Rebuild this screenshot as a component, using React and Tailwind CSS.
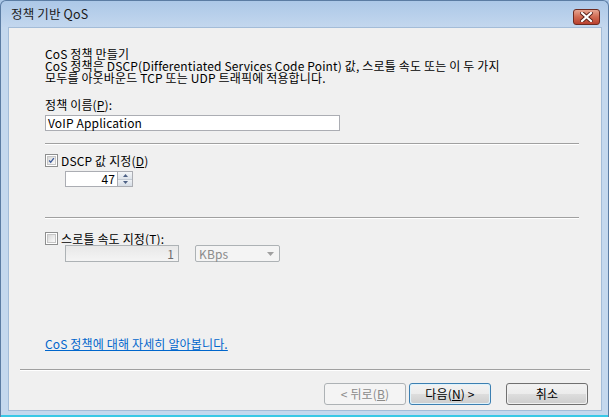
import React from "react";

function Check({ checked }) {
  return (
    <div className="w-[13px] h-[13px] border border-[#8e8f8f] bg-white p-[1px] shrink-0">
      <div className="w-full h-full border border-[#c6c6c6] bg-gradient-to-br from-[#d8d8d8] to-[#fbfbfb] relative">
        {checked && (
          <svg viewBox="0 0 9 9" className="absolute inset-0 w-full h-full">
            <path d="M1.5 4.5 L3.5 6.8 L7.5 1.5" stroke="#3b5998" strokeWidth="1.7" fill="none" />
          </svg>
        )}
      </div>
    </div>
  );
}

function Btn({ children, variant }) {
  const base =
    "w-[82px] h-[22px] rounded-[3px] flex items-center justify-center text-[12px] leading-none";
  if (variant === "disabled")
    return (
      <div className={base + " border border-[#adb2b5] bg-[#f4f4f4] text-[#8b8b8b]"}>{children}</div>
    );
  if (variant === "default")
    return (
      <div className={base + " border border-[#3c7fb1] p-[1px] bg-[#dff3fc] text-black"}>
        <div className="w-full h-full rounded-[2px] flex items-center justify-center bg-[linear-gradient(#f2f2f2_0%,#ebebeb_50%,#dddddd_50%,#cfcfcf_100%)]">{children}</div>
      </div>
    );
  return (
    <div className={base + " border border-[#707070] p-[1px] text-black"}>
      <div className="w-full h-full rounded-[2px] flex items-center justify-center bg-[linear-gradient(#f2f2f2_0%,#ebebeb_50%,#dddddd_50%,#cfcfcf_100%)]">{children}</div>
    </div>
  );
}

function Sep({ className = "" }) {
  return (
    <div className={"h-[2px] border-t border-[#a0a0a0] border-b border-b-white " + className} />
  );
}

export default function App() {
  return (
    <div className="w-[609px] h-[417px] bg-[#c4d8ee] font-['Noto_Sans_CJK_KR',sans-serif] text-[12px] tracking-[0.15px] text-black flex flex-col overflow-hidden relative">
      <div className="absolute inset-0 rounded-tl-[6px] rounded-tr-[6px] border-t border-l border-r border-[#5b7ca3] pointer-events-none" />
      {/* title bar */}
      <div className="h-[27px] shrink-0 flex items-start bg-gradient-to-b from-[#abc7e7] to-[#c3d7ee]">
        <div className="pl-[11px] pt-[6px] text-[12.5px] leading-[16px] text-[#1a1a1a]">정책 기반 QoS</div>
        <div className="ml-auto mr-[9px] mt-[9px] w-[27px] h-[16px] rounded-[3px] border border-[#6e2b20] bg-gradient-to-b from-[#e6a592] via-[#d06a52] to-[#b8402f] flex items-center justify-center">
          <svg width="13" height="10" viewBox="0 0 13 10">
            <path d="M2 1 L11 9 M11 1 L2 9" stroke="#5a2018" strokeWidth="4" strokeLinecap="square" />
            <path d="M2 1 L11 9 M11 1 L2 9" stroke="#ffffff" strokeWidth="2.2" strokeLinecap="square" />
          </svg>
        </div>
      </div>
      {/* client */}
      <div className="mr-[7px] ml-[8px] h-[384px] shrink-0 bg-[#f0f0f0] border border-[#a3bcd8] flex flex-col">
        <div className="pl-[36px] pt-[20px] flex flex-col">
          <div className="leading-[12px]">CoS 정책 만들기</div>
          <div className="leading-[12px]">
            CoS 정책은 DSCP(Differentiated Services Code Point) 값, 스로틀 속도 또는 이 두 가지
            <br />
            모두를 아웃바운드 TCP 또는 UDP 트래픽에 적용합니다.
          </div>
          <div className="mt-[15px] leading-[12px]">
            정책 이름(<span className="underline">P</span>):
          </div>
          <div className="mt-[4px] w-[295px] h-[16px] bg-white border border-[#abadb3] flex items-center pl-[2px] leading-none">
            VoIP Application
          </div>
          <Sep className="mt-[12px] w-[534px]" />
          <div className="mt-[9px] flex items-center gap-[3px] h-[13px]">
            <Check checked />
            <span className="leading-[12px]">
              DSCP 값 지정(<span className="underline">D</span>)
            </span>
          </div>
          <div className="mt-[4px] ml-[20px] flex h-[16px]">
            <div className="w-[52px] h-[16px] bg-white border border-[#abadb3] border-r-0 flex items-center justify-end pr-[2px] leading-none">
              47
            </div>
            <div className="w-[16px] h-[16px] border border-[#abadb3] flex flex-col">
              <div className="flex-1 bg-gradient-to-b from-[#f4f6f8] to-[#dde3ea] flex items-center justify-center border-b border-[#c4cbd4]">
                <svg width="5" height="3" viewBox="0 0 5 3"><path d="M0 3 L2.5 0 L5 3Z" fill="#4d6185" /></svg>
              </div>
              <div className="flex-1 bg-gradient-to-b from-[#eef1f5] to-[#d6dde6] flex items-center justify-center">
                <svg width="5" height="3" viewBox="0 0 5 3"><path d="M0 0 L2.5 3 L5 0Z" fill="#4d6185" /></svg>
              </div>
            </div>
          </div>
          <Sep className="mt-[30px] w-[534px]" />
          <div className="mt-[13px] flex items-center gap-[3px] h-[13px]">
            <Check />
            <span className="leading-[12px]">
              스로틀 속도 지정(<span className="underline">T</span>):
            </span>
          </div>
          <div className="mt-[0px] ml-[20px] flex items-center gap-[16px] h-[17px]">
            <div className="w-[114px] h-[17px] border border-[#adb2b5] bg-gradient-to-b from-[#e8e8e8] to-[#f4f4f4] flex items-center justify-end pr-[4px] text-[#6d6d6d] leading-none">
              1
            </div>
            <div className="w-[85px] h-[17px] border border-[#adb2b5] rounded-[2px] bg-[#f4f4f4] flex items-center pl-[3px] pr-[5px] text-[#8b8b8b] leading-none">
              KBps
              <svg className="ml-auto" width="7" height="4" viewBox="0 0 7 4"><path d="M0 0 L3.5 4 L7 0Z" fill="#a0a0a0" /></svg>
            </div>
          </div>
          <div className="mt-[76px] leading-[12px]">
            <span className="text-[#0066cc] underline">CoS 정책에 대해 자세히 알아봅니다.</span>
          </div>
        </div>
        <Sep className="mt-[19px] mx-[11px]" />
        <div className="mt-[12px] flex justify-end pr-[13px]">
          <Btn variant="disabled">&lt; 뒤로(<span className="underline">B</span>)</Btn>
          <div className="w-[3px]" />
          <Btn variant="default">다음(<span className="underline">N</span>) &gt;</Btn>
          <div className="w-[15px]" />
          <Btn>취소</Btn>
        </div>
      </div>
      <div className="flex-1" />
      <div className="h-[2px] bg-[#39c8e6]" />
    </div>
  );
}
